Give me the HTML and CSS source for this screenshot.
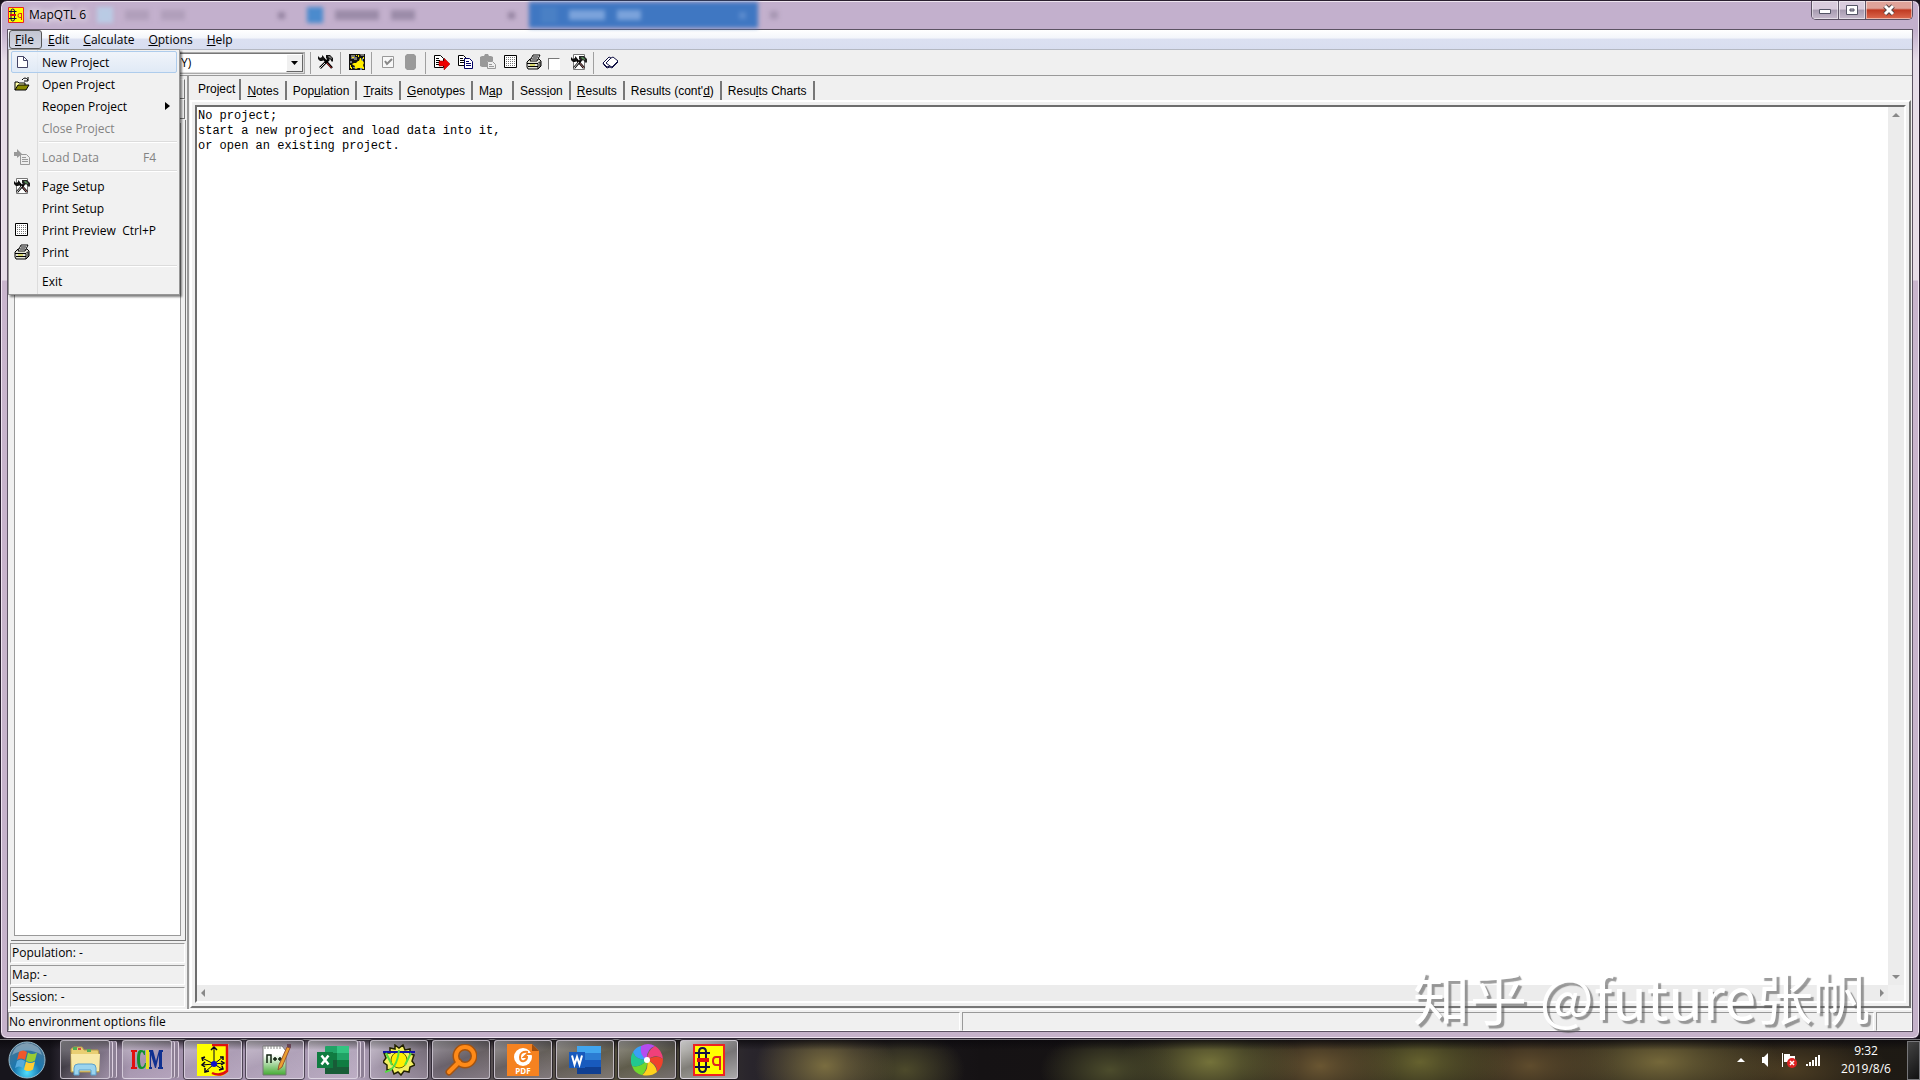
FILE: index.html
```html
<!DOCTYPE html>
<html lang="en">
<head>
    <meta charset="UTF-8">
    <meta name="viewport" content="width=device-width, initial-scale=1.0">
    <title>MapQTL 6</title>
    <link rel="stylesheet" href="styles.css">
</head>
<body>
    <!-- shared icons -->
    <svg class="sprite" width="0" height="0">
        <symbol id="i-tools" viewBox="0 0 16 16">
            <path d="M5 4l9 10" stroke="#000" stroke-width="2.500"/>
            <path d="M7 7l6.500 7" stroke="#c33" stroke-width="1"/>
            <path d="M11 5L2 14" stroke="#000" stroke-width="2.500"/>
            <path d="M7 9l-5 5" stroke="#ddd" stroke-width="1"/>
            <path d="M0 2v3l2 2h2l2-1V3L4 1v2L2 4z" fill="#111"/>
            <path d="M8 1h4l3 3v3l-1 1-2-3-2 1-2-2z" fill="#111"/>
            <path d="M10 2h2l2 2v1l-3-1z" fill="#777"/>
        </symbol>
        <symbol id="i-pagetools" viewBox="0 0 16 16">
            <path d="M2.500.500h11v15h-11z" fill="#fff" stroke="#777"/>
            <path d="M5 5l8 9" stroke="#000" stroke-width="2.500"/>
            <path d="M7 7l6 7" stroke="#b77" stroke-width="1"/>
            <path d="M11 5L3 14" stroke="#000" stroke-width="2.500"/>
            <path d="M8 8l-5 6" stroke="#ddd" stroke-width="1"/>
            <path d="M0 3v3l2 2h2l2-1V4L4 2v2L2 5z" fill="#111"/>
            <path d="M8 2h5l3 3v3l-1 1-3-3-2 1-2-2z" fill="#222"/>
            <path d="M10 3h2l2 2v1l-3-1z" fill="#585"/>
        </symbol>
        <symbol id="i-grid" viewBox="0 0 16 16">
            <path d="M1.500 1.500h12v12h-12z" fill="#fff" stroke="#000"/>
            <path d="M3 3.500h9M3 5.500h9M3 7.500h9M3 9.500h9M3 11.500h9" stroke="#777" stroke-dasharray="1 1"/>
        </symbol>
        <symbol id="i-printer" viewBox="0 0 16 16">
            <path d="M1 8l3-3h9l2 2v5l-3 3H2l-1-2z" fill="#e4e4d8" stroke="#000"/>
            <path d="M4 7l3-6h7l-3 6z" fill="#fff" stroke="#000"/>
            <path d="M7 3h5M6 5h5M1 9.500h11l2-2M2 12.500h10M12 10v5M14 8v5" stroke="#000" fill="none"/>
            <path d="M4 11h5" stroke="#cc0"/>
        </symbol>
        <symbol id="i-mapqtl" viewBox="0 0 32 32">
            <path d="M1 1h30v30H1z" fill="#ff0" stroke="#e22" stroke-width="2"/>
            <path d="M6 8q0-4 3.500-4T13 8v16q0 4-3.500 4T6 24zM2 9h15M2 23h15" fill="none" stroke="#114" stroke-width="2"/>
            <path d="M4 16h12" stroke="#d11" stroke-width="4"/>
            <path d="M27 13h-4q-3 0-3 4t3 4h4M27 12v14" fill="none" stroke="#d22" stroke-width="2"/>
        </symbol>
    </svg>

    <main class="window">
        <header class="titlebar">
            <svg class="app-icon" viewBox="0 0 32 32"><use href="#i-mapqtl"/></svg>
            <h1>MapQTL 6</h1>
            <div class="behind">
                <span class="ghost-tab"><i></i><b></b><b></b><em></em></span>
                <span class="ghost-tab second"><i></i><b></b><b></b><em></em></span>
                <span class="ghost-tab active"><i></i><b></b><b></b><em></em></span>
                <span class="ghost-plus"></span>
            </div>
            <div class="controls">
                <button type="button" aria-label="Minimize"><svg width="14" height="14" viewBox="0 0 14 14"><path d="M1.500 6.500h11v4h-11z" fill="#fff" stroke="#556"/></svg></button>
                <button type="button" aria-label="Maximize"><svg width="14" height="14" viewBox="0 0 14 14"><path d="M1.500 2.500h11v9h-11zM5 6h4v2H5z" fill="#fff" fill-rule="evenodd" stroke="#556"/></svg></button>
                <button type="button" class="close" aria-label="Close"><svg width="14" height="14" viewBox="0 0 14 14"><path d="M3 3l8 8M11 3l-8 8" stroke="#544" stroke-width="5"/><path d="M3 3l8 8M11 3l-8 8" stroke="#fff" stroke-width="3"/></svg></button>
            </div>
        </header>

        <div class="client">
            <nav class="menubar">
                <div class="menu">
                    <button type="button" class="open"><u>F</u>ile</button>
                    <div class="dropdown">
                        <button type="button" class="item hover">
                            <svg viewBox="0 0 16 16"><path d="M3.500 2.500h6l4 4v7h-10z" fill="#fff" stroke="#446"/><path d="M9.500 2.500v4h4" fill="none" stroke="#446"/></svg>
                            <span>New Project</span>
                        </button>
                        <button type="button" class="item">
                            <svg viewBox="0 0 16 16"><path d="M1 14V6h3l1 1h6v2" fill="#ffa" stroke="#000"/><path d="M1 14l3-5h11l-3 5z" fill="#880" stroke="#000"/><path d="M8 4q3-4 6 0M14 1v4h-4" fill="none" stroke="#000"/></svg>
                            <span>Open Project</span>
                        </button>
                        <button type="button" class="item">
                            <i class="no-icon"></i>
                            <span>Reopen Project</span>
                            <svg class="more" viewBox="0 0 5 8"><path d="M0 0l5 4-5 4z"/></svg>
                        </button>
                        <button type="button" class="item" disabled><i class="no-icon"></i><span>Close Project</span></button>
                        <hr>
                        <button type="button" class="item" disabled>
                            <svg viewBox="0 0 16 16"><path d="M0 3h3V0l5 5-5 4V7H0z" fill="#999"/><path d="M6.500 5.500h6l3 3v7h-9z" fill="#eee" stroke="#999"/><path d="M8 8.500h4M8 10.500h6M8 12.500h6" stroke="#999"/></svg>
                            <span>Load Data</span><kbd>F4</kbd>
                        </button>
                        <hr>
                        <button type="button" class="item"><svg><use href="#i-pagetools"/></svg><span>Page Setup</span></button>
                        <button type="button" class="item"><i class="no-icon"></i><span>Print Setup</span></button>
                        <button type="button" class="item"><svg><use href="#i-grid"/></svg><span>Print Preview</span><kbd>Ctrl+P</kbd></button>
                        <button type="button" class="item"><svg><use href="#i-printer"/></svg><span>Print</span></button>
                        <hr>
                        <button type="button" class="item"><i class="no-icon"></i><span>Exit</span></button>
                    </div>
                </div>
                <div class="menu"><button type="button"><u>E</u>dit</button></div>
                <div class="menu"><button type="button"><u>C</u>alculate</button></div>
                <div class="menu"><button type="button"><u>O</u>ptions</button></div>
                <div class="menu"><button type="button"><u>H</u>elp</button></div>
            </nav>

            <div class="toolbar">
                <div class="combo">
                    <select aria-label="Environment"><option>Y)</option></select>
                    <span class="drop"><svg width="7" height="4" viewBox="0 0 7 4"><path d="M0 0h7L3.500 4z"/></svg></span>
                </div>
                <i class="sep first"></i>
                <button type="button" aria-label="Options"><svg><use href="#i-tools"/></svg></button>
                <i class="sep"></i>
                <button type="button" aria-label="Calculate">
                    <svg viewBox="0 0 16 16"><path d="M0 0h16v16H0z" fill="#111"/><path d="M3 10l2-1h2l2-2h1l1-3h1l1 3h1l1 2-1 2 1 3-2 1-1-1h-3l-2 1-2-1H5l1-2-2-1z" fill="#fe0"/><path d="M2 1h4v2h2v3H5V5H2zM1 7h2v2H1zM11 0h4v2h-3z" fill="#777"/><path d="M3 3h2v1H3zM7 1h1v1H7zM1 11h1v3H1zM14 13h1v2h-1zM2 13h1v2H2zM9 1h1v2H9zM14 3h1v2h-1z" fill="#fe0"/><path d="M13 4h1v3h-1zM4 13h2v1H4zM11 14h2v2h-2z" fill="#68a"/></svg>
                </button>
                <i class="sep"></i>
                <button type="button" disabled aria-label="Check"><svg viewBox="0 0 16 16"><path d="M2.500 2.500h11v11h-11z" fill="#f8f8f8" stroke="#999"/><path d="M5 7l2 3 5-5" fill="none" stroke="#888" stroke-width="2"/></svg></button>
                <button type="button" disabled aria-label="Database"><svg viewBox="0 0 16 16"><path d="M4 0h7l2 2v12l-2 2H4l-2-2V2z" fill="#9a9a9a"/></svg></button>
                <i class="sep"></i>
                <button type="button" aria-label="Export"><svg viewBox="0 0 16 16"><path d="M.500 1.500h6l3 3v9h-9z" fill="#fff" stroke="#000"/><path d="M2 4.500h3M2 6.500h4M2 8.500h3M2 10.500h3" stroke="#000"/><path d="M5 7h5V4l6 6-6 6v-4H5z" fill="#e00" stroke="#800" stroke-width=".5"/></svg></button>
                <button type="button" aria-label="Copy"><svg viewBox="0 0 16 16"><path d="M1.500 1.500h5l3 3v7h-8z" fill="#fff" stroke="#000"/><path d="M3 4.500h3M3 6.500h4M3 8.500h4" stroke="#000"/><path d="M7.500 4.500h5l3 3v7h-8z" fill="#fff" stroke="#006"/><path d="M9 7.500h3M9 9.500h5M9 11.500h5" stroke="#006"/></svg></button>
                <button type="button" disabled aria-label="Paste"><svg viewBox="0 0 16 16"><path d="M0 3l2-1h2l1-2h3l1 2h2l2 1v4h-6v6H2l-2-1z" fill="#999"/><path d="M7.500 7.500h5l3 3v4h-8z" fill="#eee" stroke="#999"/><path d="M9 10.500h3M9 12.500h5" stroke="#999"/></svg></button>
                <button type="button" aria-label="Print preview"><svg><use href="#i-grid"/></svg></button>
                <button type="button" aria-label="Print"><svg><use href="#i-printer"/></svg></button>
                <input type="checkbox" aria-label="Print in colour">
                <button type="button" aria-label="Page setup"><svg><use href="#i-pagetools"/></svg></button>
                <i class="sep"></i>
                <button type="button" aria-label="Manual"><svg viewBox="0 0 16 16"><path d="M1 9l6-6 2 1 2-1 5 4-6 6-2-1-3 1z" fill="#fff" stroke="#114"/><path d="M9 4L4 9l4 3M1 9l1 2 3 3 3-1 2 1 6-6" fill="none" stroke="#114"/></svg></button>
            </div>

            <div class="workspace">
                <aside class="side">
                    <button type="button" class="side-button" aria-label="Expand"></button>
                    <button type="button" class="side-button" aria-label="Collapse"></button>
                    <div class="tree"></div>
                    <p>Population: -</p>
                    <p>Map: -</p>
                    <p>Session: -</p>
                </aside>
                <section class="pages">
                    <div class="tabs" role="tablist">
                        <button type="button" role="tab" class="current">Pro<u>j</u>ect</button>
                        <button type="button" role="tab"><u>N</u>otes</button>
                        <button type="button" role="tab">Pop<u>u</u>lation</button>
                        <button type="button" role="tab"><u>T</u>raits</button>
                        <button type="button" role="tab"><u>G</u>enotypes</button>
                        <button type="button" role="tab">M<u>a</u>p</button>
                        <button type="button" role="tab">Sess<u>i</u>on</button>
                        <button type="button" role="tab"><u>R</u>esults</button>
                        <button type="button" role="tab">Results (cont'<u>d</u>)</button>
                        <button type="button" role="tab">Resu<u>l</u>ts Charts</button>
                    </div>
                    <div class="sheet">
                        <div class="memo">
                            <textarea readonly aria-label="Project">No project;
start a new project and load data into it,
or open an existing project.</textarea>
                            <div class="scroll vertical"><i class="up"></i><i class="down"></i></div>
                            <div class="scroll horizontal"><i class="left"></i><i class="right"></i></div>
                        </div>
                    </div>
                </section>
            </div>

            <footer class="statusbar">
                <span class="message">No environment options file</span>
                <span class="progress"></span>
                <span class="grip"></span>
            </footer>
        </div>
    </main>

    <footer class="taskbar">
        <button type="button" class="start" aria-label="Start">
            <svg width="38" height="38" viewBox="0 0 38 38">
                <defs><radialGradient id="orb" cx=".5" cy=".85" r=".8"><stop offset="0" stop-color="#4fe0ff"/><stop offset=".45" stop-color="#1a78b0"/><stop offset="1" stop-color="#4a7390"/></radialGradient></defs>
                <circle cx="19" cy="19" r="18" fill="url(#orb)" stroke="#9bc" stroke-width="1"/>
                <path d="M4 14q15-9 30 0-3-11-15-12Q7 3 4 14z" fill="#fff" opacity=".3"/>
                <path d="M11 11q4-3 8 0l-2 8q-4-3-8 0z" fill="#f0582a"/>
                <path d="M20 11.500q4 3 9 0l-2 8q-5 3-9 0z" fill="#9c3"/>
                <path d="M9 20q4-3 8 0l-2 7q-4-3-8 0z" fill="#5ad"/>
                <path d="M18 20.500q4 3 9 0l-2 8q-5 3-9 0z" fill="#fc3"/>
            </svg>
        </button>

        <button type="button" class="task stack" aria-label="Explorer">
            <svg viewBox="0 0 32 32"><path d="M2 5l3-2h8l2 3h14l1 4v18H2z" fill="#e9cf72" stroke="#b79b4a"/><path d="M2 10h29l-1 17H3z" fill="#f8e9a8"/><path d="M4 3h4v3H4zM18 5h4v3h-4z" fill="#5a5"/><path d="M9 4h3v2H9z" fill="#d44"/><path d="M5 31v-7q0-4 4-4h14q4 0 4 4v7h-5v-5H10v5z" fill="#9bd4ee" stroke="#5aa0cc"/></svg>
        </button>
        <button type="button" class="task stack" aria-label="ICM">
            <svg viewBox="0 0 32 32"><path d="M0 6h6v2H4v15h2v2H0v-2h1V8H0z" fill="#e01010"/><path d="M14 6v5h-1q-1-3-2-3-2 0-2 7t2 8q2 0 3-4h1q0 6-5 6-4 0-4-10T10 6q2 0 3 1z" fill="#109030"/><path d="M15 6h3v19h-3z" fill="#e8e020"/><path d="M18 6h4l3 11 3-11h4v2h-1v15h1v2h-5v-2h1V11l-3 13h-1l-4-13v12h1v2h-3v-2h1V8h-1z" fill="#103090"/></svg>
        </button>
        <button type="button" class="task wide" aria-label="JoinMap">
            <svg viewBox="0 0 32 32"><path d="M0 0h32v32H0z" fill="#ff0"/><path d="M31 1v27l-6 4h7V0z" fill="#b9a9bd"/><path d="M15 1h15v26q-7 6-15 2" fill="none" stroke="#e01010" stroke-width="2.500"/><path d="M17 20V3M17 20l9-7M17 20L5 14M17 20l-12 1M17 20l-9 8M17 20l8 5M17 20l10-1" fill="none" stroke="#002" stroke-width="1"/><path d="M14 6l3-3 3 3M8 13l-3 1 1 3M8 18l-3 3 3 2M8 24v4l4-1M22 26l4-1-1-3M23 13h3v3M24 17l3 2-3 2" fill="none" stroke="#002" stroke-width="1.500"/><circle cx="17" cy="20" r="3" fill="#11c"/></svg>
        </button>
        <button type="button" class="task wide" aria-label="Notepad++">
            <svg viewBox="0 0 32 32"><defs><linearGradient id="npp" x2="0" y2="1"><stop offset=".3" stop-color="#fff"/><stop offset="1" stop-color="#4a3"/></linearGradient></defs><path d="M4 2h19l4 5v24H4z" fill="url(#npp)" stroke="#777"/><path d="M6 2v3M9 2v3M12 2v3M15 2v3M18 2v3M21 2v3" stroke="#888"/><path d="M8 19v-8h4v8M14 15h4M16 13v4M19 15h4M21 13v4" stroke="#121" stroke-width="1.500" fill="none"/><path d="M28 3l3 1-8 19-4 3 1-5z" fill="#eca030" stroke="#953"/><path d="M28 0h4v4l-4-1z" fill="#645"/></svg>
        </button>
        <button type="button" class="task stack" aria-label="Excel">
            <svg viewBox="0 0 32 32"><path d="M9 2h22q1 0 1 1v26q0 1-1 1H9q-1 0-1-1V3q0-1 1-1z" fill="#21a366"/><path d="M20 2h12v7H20z" fill="#33c481"/><path d="M8 9h12v7H8z" fill="#107c41"/><path d="M8 16h12v14H8z" fill="#185c37"/><path d="M20 16h12v7H20z" fill="#107c41"/><path d="M20 23h12v7H20z" fill="#185c37"/><path d="M0 8h16v16H0z" fill="#107c41"/><path d="M4.500 11.500l7 9M11.500 11.500l-7 9" stroke="#fff" stroke-width="2.500"/></svg>
        </button>
        <button type="button" class="task wide" aria-label="GGT">
            <svg viewBox="0 0 32 32"><path d="M12 1l4 3 4-3 2 5 5-1v5l4 1-2 6 3 4-5 2-1 5-5-1-3 4-3-3-4 2-2-5-5 1v-5l-4-3 3-4-2-5 6 0V4l5 1z" fill="#f4f060" stroke="#220" stroke-width="1.500"/><circle cx="16" cy="16" r="8" fill="#fe0" stroke="#660"/><path d="M0 8h32" stroke="#11a" stroke-width="2"/><path d="M2 28q12-2 14-22M3 9l6 12M28 9l-6 12" fill="none" stroke="#5d4" stroke-width="2"/></svg>
        </button>
        <button type="button" class="task wide" aria-label="Everything">
            <svg viewBox="0 0 32 32"><path d="M14 18L4 28" stroke="#a35310" stroke-width="7" stroke-linecap="round"/><circle cx="20" cy="12" r="9" fill="none" stroke="#a35310" stroke-width="7"/><path d="M14 18L4 28" stroke="#ff8a18" stroke-width="4" stroke-linecap="round"/><circle cx="20" cy="12" r="9" fill="none" stroke="#ff8a18" stroke-width="4"/></svg>
        </button>
        <button type="button" class="task wide" aria-label="Foxit PDF">
            <svg viewBox="0 0 32 32"><path d="M0 0h25l7 7v25H0z" fill="#f58220"/><path d="M25 0v7h7z" fill="#a05010"/><circle cx="16" cy="13" r="9" fill="#fff"/><path d="M21 8q-8-1-8 5 0 5 4 4 3-1 3-4h-3l3-3h6" fill="none" stroke="#f58220" stroke-width="2"/><text x="16" y="30" class="pdf">PDF</text></svg>
        </button>
        <button type="button" class="task wide" aria-label="Word">
            <svg viewBox="0 0 32 32"><path d="M8 2h24v7H8z" fill="#41a5ee"/><path d="M8 9h24v7H8z" fill="#2b7cd3"/><path d="M8 16h24v7H8z" fill="#185abd"/><path d="M8 23h24v7H8z" fill="#103f91"/><path d="M0 8h16v16H0z" fill="#185abd"/><path d="M3 11.500l2.500 9L8 13l2.500 7.500 2.500-9" fill="none" stroke="#fff" stroke-width="2"/></svg>
        </button>
        <button type="button" class="task wide" aria-label="Browser">
            <svg viewBox="0 0 32 32"><path d="M16 16Q7 13 10 2q7-4 14 0-9 3-8 14z" fill="#b44cf0"/><path d="M16 16q0-9 8-14 7 4 8 13-7-6-16 1z" fill="#f0407a"/><path d="M16 16q9-6 16-1 0 8-6 13 1-8-10-12z" fill="#f0422c"/><path d="M16 16q9 4 10 12-6 5-15 3 7-5 5-15z" fill="#ffd21c"/><path d="M16 16q1 9-5 15-7-1-10-9 8 2 15-6z" fill="#6fd82e"/><path d="M16 16Q9 24 1 22-2 15 2 8q3 8 14 8z" fill="#22c890"/><path d="M16 16Q5 16 2 8q3-5 8-6-2 9 6 14z" fill="#3aa0f8"/><circle cx="16" cy="16" r="3" fill="#fff"/></svg>
        </button>
        <button type="button" class="task wide running" aria-label="MapQTL 6">
            <svg viewBox="0 0 32 32"><use href="#i-mapqtl"/></svg>
        </button>

        <div class="tray">
            <svg class="expand" width="8" height="5" viewBox="0 0 8 5"><path d="M4 0l4 4H0z" fill="#fff"/></svg>
            <svg width="16" height="16" viewBox="0 0 16 16"><path d="M5 5h2l4-4v14l-4-4H5z" fill="#fff"/></svg>
            <svg width="16" height="16" viewBox="0 0 16 16"><path d="M1.500 1v14" stroke="#fff"/><path d="M3 2h6v2h5v6H3z" fill="#fff"/><circle cx="11" cy="11" r="5" fill="#d22"/><path d="M9 9l4 4M13 9l-4 4" stroke="#fff" stroke-width="1.500"/></svg>
            <svg width="16" height="16" viewBox="0 0 16 16"><path d="M2 12v2M5 10v4M8 8v6M11 5v9M14 3v11" stroke="#fff" stroke-width="2"/></svg>
            <time>9:32<br>2019/8/6</time>
            <button type="button" class="show-desktop" aria-label="Show desktop"></button>
        </div>
    </footer>

    <div class="watermark">知乎 @future张帆</div>
</body>
</html>
```
FILE: styles.css
```css
* {
    box-sizing: border-box;
}

body {
    margin: 0;
    height: 100vh;
    display: flex;
    flex-direction: column;
    overflow: hidden;
    background: #16131a;
    color: #000;
    font-family: "Open Sans", "Noto Sans CJK SC", sans-serif;
    font-size: 12px;
}

button, select, textarea {
    font: inherit;
    color: inherit;
    border: none;
    background: none;
    padding: 0;
    margin: 0;
    border-radius: 0;
}

.sprite {
    position: absolute;
}

/* window frame */
.window {
    flex: 1;
    min-height: 0;
    display: flex;
    flex-direction: column;
    padding: 0 6px 6px;
    border: 1px solid #2a2030;
    border-radius: 7px;
    box-shadow: inset 0 0 0 1px #eee4f0;
    background: linear-gradient(#c3b0cd 0, #c3b0cd 30px, #e6dde8 60px, #e6dde8 279px, #c9b5cd 280px, #c5b2ca);
}

.titlebar {
    height: 28px;
    flex: none;
    display: flex;
    align-items: center;
    padding-left: 1px;
}

.app-icon {
    width: 16px;
    height: 16px;
}

.titlebar h1 {
    width: 68px;
    margin: 0 0 0 5px;
    font-size: 12px;
    font-weight: normal;
    line-height: 14px;
    white-space: nowrap;
    text-shadow: 0 0 6px #fff, 0 0 8px #fff;
}

/* browser tabs seen through the glass */
.behind {
    flex: 1;
    height: 26px;
    display: flex;
    filter: blur(2px);
}

.ghost-tab {
    width: 210px;
    display: flex;
    align-items: center;
    gap: 12px;
    padding-right: 22px;
}

.ghost-tab.second {
    width: 222px;
    padding-right: 14px;
}

.ghost-tab.active {
    width: 229px;
    padding: 0 12px;
    background: #3f77c2;
}

.ghost-tab i {
    width: 16px;
    height: 16px;
    background: #b9cbe4;
}

.ghost-tab.second i {
    background: #4b8bcd;
}

.ghost-tab.active i {
    background: #4a80c5;
}

.ghost-tab b {
    width: 24px;
    height: 10px;
    background: #b09fba;
}

.ghost-tab.second b {
    background: #9b8ca8;
}

.ghost-tab.second b:nth-child(2) {
    width: 44px;
}

.ghost-tab.active b {
    background: #7ba3db;
}

.ghost-tab.active b:nth-child(2) {
    width: 36px;
}

.ghost-tab em {
    width: 7px;
    height: 7px;
    margin-left: auto;
    background: #9786a3;
}

.ghost-tab.active em {
    background: #5b8bce;
}

.ghost-plus {
    width: 8px;
    height: 8px;
    margin: 9px 12px;
    background: #a797b3;
}

.controls {
    align-self: flex-start;
    display: flex;
    height: 19px;
    border: 1px solid #5a5062;
    border-top: none;
    border-radius: 0 0 5px 5px;
    overflow: hidden;
}

.controls button {
    width: 27px;
    display: flex;
    align-items: center;
    justify-content: center;
    border-right: 1px solid #62586a;
    box-shadow: inset 0 0 0 1px rgba(255, 255, 255, 0.5);
    background: linear-gradient(#d9ccdd 45%, #a79bb0 50%, #c7bacd);
}

.controls .close {
    width: 46px;
    border-right: none;
    background: linear-gradient(#e0a399 40%, #c03a22 50%, #dc6a50);
}

.client {
    flex: 1;
    min-height: 0;
    display: flex;
    flex-direction: column;
    border: 1px solid #5c5363;
    background: #f0f0f0;
}

/* menu */
.menubar {
    height: 19px;
    flex: none;
    display: flex;
    padding-left: 1px;
    background: linear-gradient(#fff, #f4f6fb 40%, #dbe0f1 50%, #d8def0);
}

.menu {
    position: relative;
    display: flex;
}

.menu > button {
    padding: 0 7px 0 5px;
    line-height: 17px;
    border: 1px solid transparent;
}

.menu > .open {
    border: 1px solid #555;
    border-radius: 3px;
    background: linear-gradient(#c3c6d1, #d3d7e4);
}

.dropdown {
    position: absolute;
    z-index: 5;
    top: 19px;
    left: -1px;
    width: 172px;
    padding: 1px 2px 2px;
    border: 1px solid #979797;
    box-shadow: 2px 2px 2px rgba(0, 0, 0, 0.5);
    background: linear-gradient(90deg, #f1f1f1 28px, #dcdcdc 28px, #dcdcdc 29px, #f1f1f1 29px);
}

.item {
    width: 100%;
    height: 22px;
    display: flex;
    align-items: center;
    padding: 0 20px 0 2px;
    border: 1px solid transparent;
    border-radius: 2px;
    text-align: left;
    white-space: nowrap;
}

.item svg, .no-icon {
    width: 16px;
    height: 16px;
    flex: none;
}

.item span {
    margin-left: 12px;
}

.item kbd {
    margin-left: auto;
    font: inherit;
}

.item .more {
    width: 5px;
    height: 8px;
    margin: 0 -14px 0 auto;
}

.item:disabled {
    color: #838383;
}

.hover {
    border-color: #aeccec;
    background: linear-gradient(rgba(240, 245, 252, 0.8), rgba(220, 232, 247, 0.8));
}

.dropdown hr {
    height: 2px;
    margin: 2px 0 3px 28px;
    border: none;
    border-top: 1px solid #dcdcdc;
    background: #fff;
}

/* toolbar */
.toolbar {
    height: 27px;
    flex: none;
    display: flex;
    align-items: center;
    padding: 0 1px 0 2px;
    border-top: 1px solid #b4b8c2;
    border-bottom: 1px solid #999;
}

.combo {
    width: 295px;
    height: 22px;
    display: flex;
    border: 2px solid;
    border-color: #777 #ddd #ddd #777;
    outline: 1px solid #aaa;
    outline-offset: -1px;
    background: #fff;
}

.combo select {
    flex: 1;
    padding-left: 169px;
    appearance: none;
    outline: none;
}

.drop {
    width: 17px;
    display: flex;
    align-items: center;
    justify-content: center;
    border: 1px solid;
    border-color: #fff #666 #666 #fff;
    background: #f0f0f0;
}

.sep {
    width: 1px;
    height: 22px;
    margin: 0 4px 0 3px;
    background: #a0a0a0;
}

.sep.first {
    margin: 0 3px 0 5px;
}

.toolbar button {
    width: 23px;
    height: 21px;
    margin-bottom: 2px;
    display: flex;
    align-items: center;
    justify-content: center;
}

.toolbar button svg {
    width: 16px;
    height: 16px;
}

.toolbar input {
    width: 12px;
    height: 12px;
    margin: 2px 7px 0 3px;
    appearance: none;
    border: 1px solid;
    border-color: #777 #fff #fff #777;
    background: #fff;
}

/* work area */
.workspace {
    flex: 1;
    min-height: 0;
    display: flex;
}

.side {
    width: 181px;
    display: flex;
    flex-direction: column;
    padding: 3px 2px 0;
    border-right: 2px solid #999;
}

.side-button {
    height: 20px;
    flex: none;
    border: 1px solid;
    border-color: #fff #777 #777 #fff;
}

.tree {
    flex: 1;
    margin-bottom: 3px;
    border: 5px solid #f0f0f0;
    outline: 1px solid #999;
    outline-offset: -5px;
    box-shadow: 1px 1px 0 #777;
    background: #fff;
}

.side p {
    height: 20px;
    margin: 0 0 2px;
    padding-left: 1px;
    line-height: 18px;
    border: 1px solid;
    border-color: #999 #fff #fff #999;
}

.pages {
    flex: 1;
    min-width: 0;
    display: flex;
    flex-direction: column;
    padding: 0 1px 1px 1px;
}

.tabs {
    height: 24px;
    flex: none;
    display: flex;
    align-items: flex-end;
    font-family: "Liberation Sans", Arial, sans-serif;
}

.tabs button {
    height: 19px;
    min-width: 41px;
    padding: 1px 6px 0;
    text-align: left;
    white-space: nowrap;
    border-right: 2px solid #777;
}

.tabs .current {
    height: 21px;
    padding: 0 4px 1px 8px;
}

.sheet {
    flex: 1;
    min-height: 0;
    display: flex;
    padding: 3px;
    border: 2px solid;
    border-color: #fff #777 #777 #fff;
}

.memo {
    flex: 1;
    display: grid;
    grid-template-columns: 1fr 16px;
    grid-template-rows: 1fr 16px;
    border: 2px solid;
    border-color: #6d6d6d #fff #fff #6d6d6d;
    background: #f0f0f0;
}

.memo textarea {
    padding: 2px 1px;
    resize: none;
    outline: none;
    overflow: hidden;
    background: #fff;
    font-family: "Liberation Mono", "Courier New", monospace;
    line-height: 15px;
}

.scroll {
    display: flex;
    justify-content: space-between;
    align-items: center;
    padding: 4px;
    background: #ececec;
}

.vertical {
    flex-direction: column;
    padding: 6px 0;
}

.scroll i {
    border: 4px solid transparent;
}

.scroll .up {
    border-top: none;
    border-bottom-color: #888;
}

.scroll .down {
    border-bottom: none;
    border-top-color: #888;
}

.scroll .left {
    border-left: none;
    border-right-color: #888;
}

.scroll .right {
    border-right: none;
    border-left-color: #888;
}

/* status bar */
.statusbar {
    height: 22px;
    flex: none;
    display: flex;
    gap: 2px;
    padding-top: 2px;
    border-top: 1px solid #fff;
}

.statusbar span {
    flex: 1;
    line-height: 18px;
    border: 1px solid;
    border-color: #999 #fff #fff #999;
}

.statusbar .message {
    flex: 0 0 50%;
}

.statusbar .grip {
    flex: none;
    width: 36px;
}

/* taskbar */
.taskbar {
    height: 41px;
    flex: none;
    display: flex;
    gap: 4px;
    border-top: 1px solid #77767a;
    background:
        linear-gradient(rgba(10, 8, 12, 0.75), transparent 10px),
        radial-gradient(ellipse 70px 50px at 825px 26px, #7a6d40, transparent),
        radial-gradient(ellipse 60px 40px at 905px 30px, #4d4a2b, transparent),
        radial-gradient(ellipse 70px 40px at 1110px 30px, #4c4c2c, transparent),
        radial-gradient(ellipse 90px 50px at 1210px 22px, #74723a, transparent),
        radial-gradient(ellipse 80px 50px at 1320px 26px, #6a5632, transparent),
        radial-gradient(ellipse 90px 50px at 1420px 22px, #66622f, transparent),
        radial-gradient(ellipse 90px 50px at 1530px 26px, #5f4c2d, transparent),
        radial-gradient(ellipse 120px 50px at 1660px 22px, #75683a, transparent),
        radial-gradient(ellipse 100px 40px at 1790px 30px, #4c3d23, transparent),
        linear-gradient(90deg, #17151c 50px, #9c8aa6 130px, #ac9db5 360px, #5a515c 440px, #4d4a35 640px, #29252c 750px, #151214 980px, #1e1a14);
}

.start {
    width: 56px;
    display: flex;
    align-items: center;
    justify-content: flex-end;
    padding-right: 10px;
}

.task {
    width: 58px;
    height: 39px;
    display: flex;
    align-items: center;
    justify-content: center;
    border: 1px solid rgba(230, 222, 234, 0.7);
    border-radius: 3px;
    box-shadow: 0 0 0 1px rgba(20, 15, 25, 0.6);
    background: linear-gradient(160deg, rgba(255, 255, 255, 0.4), rgba(255, 255, 255, 0.1) 50%, rgba(220, 205, 225, 0.35));
}

.task svg {
    width: 32px;
    height: 32px;
}

/* several windows grouped under one button */
.stack {
    width: 50px;
    margin-right: 8px;
    box-shadow: 3px 0 0 -1px #8d8095, 4px 0 0 -1px #ddd0e0, 7px 0 0 -1px #8d8095, 8px 0 0 -1px #ddd0e0;
}

.running {
    background: linear-gradient(160deg, rgba(255, 255, 255, 0.75), rgba(255, 255, 255, 0.35) 50%, rgba(255, 255, 255, 0.6));
}

.pdf {
    fill: #fff;
    font-size: 8px;
    font-weight: bold;
    text-anchor: middle;
}

.tray {
    margin-left: auto;
    display: flex;
    align-items: center;
    gap: 8px;
    color: #fff;
}

.tray .expand {
    margin-right: 4px;
}

.tray time {
    width: 66px;
    margin-left: 4px;
    line-height: 18px;
    text-align: center;
}

.show-desktop {
    width: 13px;
    height: 39px;
    border: 1px solid #77777a;
    background: linear-gradient(135deg, #444, #111);
}

.watermark {
    position: absolute;
    z-index: 10;
    right: 50px;
    bottom: 45px;
    color: #fff;
    font-family: "Noto Sans CJK SC", sans-serif;
    font-size: 57px;
    line-height: 80px;
    text-shadow: 3px 3px 1px rgba(90, 90, 90, 0.6);
    pointer-events: none;
}
```
